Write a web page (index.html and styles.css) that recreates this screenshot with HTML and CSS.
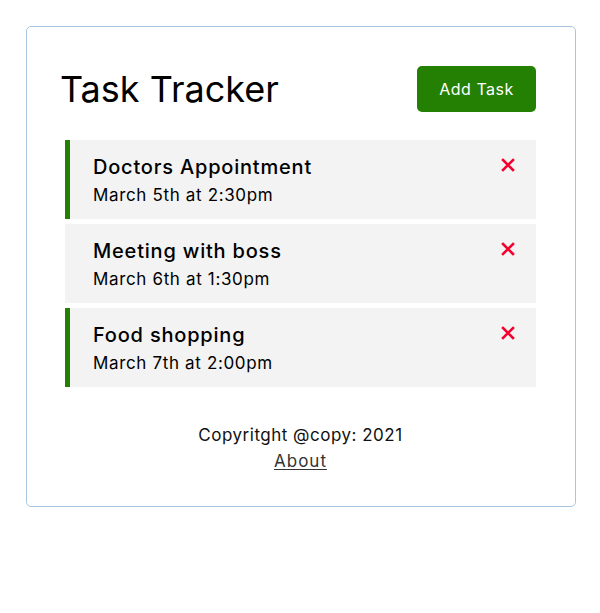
FILE: index.html
```html
<!DOCTYPE html>
<html lang="en">
<head>
<meta charset="utf-8">
<title>Task Tracker</title>
<link rel="stylesheet" href="styles.css">
</head>
<body>
<div class="container">
  <header class="header">
    <h1 class="title">Task Tracker</h1>
    <button class="btn" type="button">Add Task</button>
  </header>
  <div class="tasks">
    <div class="task reminder">
      <div class="task-head">
        <h3 class="task-title">Doctors Appointment</h3>
        <svg class="del" viewBox="0 0 14 14" width="14" height="14" aria-hidden="true"><path d="M2 2 L12 12 M12 2 L2 12"/></svg>
      </div>
      <p class="task-day">March 5th at 2:30pm</p>
    </div>
    <div class="task">
      <div class="task-head">
        <h3 class="task-title">Meeting with boss</h3>
        <svg class="del" viewBox="0 0 14 14" width="14" height="14" aria-hidden="true"><path d="M2 2 L12 12 M12 2 L2 12"/></svg>
      </div>
      <p class="task-day">March 6th at 1:30pm</p>
    </div>
    <div class="task reminder">
      <div class="task-head">
        <h3 class="task-title">Food shopping</h3>
        <svg class="del" viewBox="0 0 14 14" width="14" height="14" aria-hidden="true"><path d="M2 2 L12 12 M12 2 L2 12"/></svg>
      </div>
      <p class="task-day">March 7th at 2:00pm</p>
    </div>
  </div>
  <footer class="footer">
    <p class="copy">Copyritght @copy: 2021</p>
    <a class="about" href="#">About</a>
  </footer>
</div>
</body>
</html>
```

FILE: styles.css
```css
* { box-sizing: border-box; }
body {
  margin: 0;
  font-family: "Inter", "DejaVu Sans", sans-serif;
  color: #000;
  background: #fff;
}
.container {
  width: 550px;
  min-height: 481px;
  margin: 26px 0 0 26px;
  border: 1px solid #a9c6e0;
  border-radius: 5px;
  padding: 39px 34px 20px 33px;
}
.header {
  display: flex;
  justify-content: space-between;
  align-items: center;
  height: 46px;
  margin-bottom: 28px;
}
.title {
  margin: 0;
  font-size: 36px;
  font-weight: 400;
  line-height: 46px;
}
.btn {
  width: 119px;
  height: 46px;
  margin-right: 5px;
  border: 0;
  border-radius: 5px;
  background: #248003;
  color: #fff;
  font-family: inherit;
  font-size: 16px;
  letter-spacing: 0.5px;
  cursor: pointer;
}
.tasks {
  display: flex;
  flex-direction: column;
  gap: 5px;
  margin: 0 5px;
}
.task {
  height: 79px;
  background: #f3f3f3;
  border-left: 5px solid transparent;
  padding: 14px 21px 0 23px;
}
.task.reminder { border-left-color: #248003; }
.task-head {
  display: flex;
  justify-content: space-between;
  align-items: flex-start;
}
.task-title {
  margin: 0;
  font-size: 20px;
  font-weight: 500;
  line-height: 26px;
  letter-spacing: 0.8px;
}
.del {
  margin-top: 4px;
  fill: none;
  stroke: #f5002f;
  stroke-width: 2.6;
  stroke-linecap: square;
}
.task-day {
  margin: 2px 0 0;
  font-size: 17px;
  line-height: 26px;
  letter-spacing: 0.65px;
}
.footer {
  margin-top: 35px;
  text-align: center;
  font-size: 17px;
  line-height: 26px;
  color: #111;
  letter-spacing: 0.5px;
}
.copy { margin: 0; }
.about {
  color: #333;
  letter-spacing: 1px;
  text-underline-offset: 2px;
}
```
